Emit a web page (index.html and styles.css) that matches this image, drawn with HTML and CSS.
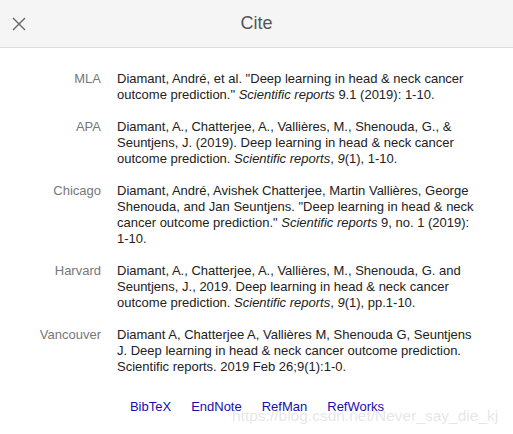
FILE: index.html
```html
<!DOCTYPE html>
<html>
<head>
<meta charset="utf-8">
<link rel="stylesheet" href="styles.css">
</head>
<body>
<div class="dialog">
  <div class="header">
    <button class="close" aria-label="Close">
      <svg width="14" height="14" viewBox="0 0 14 14"><path d="M1 1 L13 13 M13 1 L1 13" stroke="#666" stroke-width="1.4" fill="none"/></svg>
    </button>
    <div class="title">Cite</div>
  </div>
  <div class="content">
    <div class="cites">
      <div class="label">MLA</div>
      <div class="cite">Diamant, André, et al. "Deep learning in head &amp; neck cancer outcome prediction." <i>Scientific reports</i> 9.1 (2019): 1-10.</div>
      <div class="label">APA</div>
      <div class="cite">Diamant, A., Chatterjee, A., Vallières, M., Shenouda, G., &amp; Seuntjens, J. (2019). Deep learning in head &amp; neck cancer outcome prediction. <i>Scientific reports</i>, <i>9</i>(1), 1-10.</div>
      <div class="label">Chicago</div>
      <div class="cite">Diamant, André, Avishek Chatterjee, Martin Vallières, George Shenouda, and Jan Seuntjens. "Deep learning in head &amp; neck cancer outcome prediction." <i>Scientific reports</i> 9, no. 1 (2019): 1-10.</div>
      <div class="label">Harvard</div>
      <div class="cite">Diamant, A., Chatterjee, A., Vallières, M., Shenouda, G. and Seuntjens, J., 2019. Deep learning in head &amp; neck cancer outcome prediction. <i>Scientific reports</i>, <i>9</i>(1), pp.1-10.</div>
      <div class="label">Vancouver</div>
      <div class="cite">Diamant A, Chatterjee A, Vallières M, Shenouda G, Seuntjens J. Deep learning in head &amp; neck cancer outcome prediction. Scientific reports. 2019 Feb 26;9(1):1-0.</div>
    </div>
    <div class="links">
      <a href="#">BibTeX</a>
      <a href="#">EndNote</a>
      <a href="#">RefMan</a>
      <a href="#">RefWorks</a>
    </div>
  </div>
  <div class="watermark">https://blog.csdn.net/Never_say_die_kj</div>
</div>
</body>
</html>
```

FILE: styles.css
```css
html, body {
  margin: 0;
  padding: 0;
  background: #fff;
}
body {
  font-family: "Liberation Sans", Arial, sans-serif;
  font-size: 13px;
  color: #222;
}
.dialog {
  position: relative;
  width: 513px;
  height: 434px;
  overflow: hidden;
}
.header {
  height: 47px;
  background: #f5f5f5;
  border-bottom: 1px solid #dcdcdc;
  display: flex;
  align-items: center;
  justify-content: center;
  position: relative;
}
.close {
  position: absolute;
  left: 11px;
  top: 16px;
  width: 16px;
  height: 16px;
  padding: 1px;
  border: 0;
  background: none;
  display: flex;
  align-items: center;
  justify-content: center;
}
.title {
  font-size: 18px;
  color: #555;
}
.content {
  padding-top: 23px;
}
.cites {
  display: grid;
  grid-template-columns: 101px 364px;
  column-gap: 16px;
  row-gap: 16px;
  line-height: 16px;
}
.label {
  text-align: right;
  color: #777;
}
.cite {
  color: #222;
}
.links {
  display: flex;
  justify-content: center;
  gap: 20px;
  margin-top: 24px;
  line-height: 16px;
  padding-left: 1px;
}
.links a {
  color: #1a0dab;
  text-decoration: none;
}
.watermark {
  position: absolute;
  left: 232px;
  top: 407px;
  font-size: 15.5px;
  color: rgba(200, 200, 200, 0.45);
  white-space: nowrap;
  pointer-events: none;
}
```
